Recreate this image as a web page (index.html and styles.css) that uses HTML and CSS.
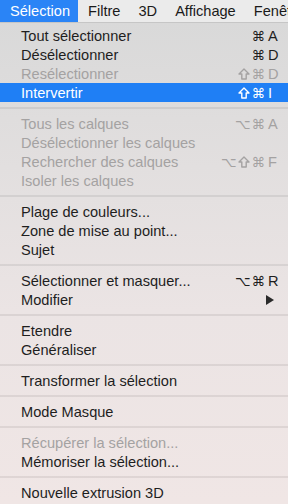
FILE: index.html
```html
<!DOCTYPE html>
<html lang="fr">
<head>
  <meta charset="UTF-8">
  <title>Sélection</title>
  <link rel="stylesheet" href="styles.css">
</head>
<body>
  <div class="menubar">
    <span class="bar-item open">Sélection</span>
    <span class="bar-item">Filtre</span>
    <span class="bar-item">3D</span>
    <span class="bar-item">Affichage</span>
    <span class="bar-item">Fenêtre</span>
  </div>

  <div class="menu">
    <div class="item"><span class="label">Tout sélectionner</span><span class="keys"><span class="mods">⌘</span><span class="key">A</span></span></div>
    <div class="item"><span class="label">Désélectionner</span><span class="keys"><span class="mods">⌘</span><span class="key">D</span></span></div>
    <div class="item disabled"><span class="label">Resélectionner</span><span class="keys"><svg class="shift" viewBox="0 0 12 12"><path d="M6 1 L11 6 H8.2 V11 H3.8 V6 H1 Z"/></svg><span class="mods">⌘</span><span class="key">D</span></span></div>
    <div class="item selected"><span class="label">Intervertir</span><span class="keys"><svg class="shift" viewBox="0 0 12 12"><path d="M6 1 L11 6 H8.2 V11 H3.8 V6 H1 Z"/></svg><span class="mods">⌘</span><span class="key">I</span></span></div>
    <div class="sep"></div>
    <div class="item disabled"><span class="label">Tous les calques</span><span class="keys"><span class="mods">⌥⌘</span><span class="key">A</span></span></div>
    <div class="item disabled"><span class="label">Désélectionner les calques</span></div>
    <div class="item disabled"><span class="label">Rechercher des calques</span><span class="keys"><span class="mods">⌥</span><svg class="shift" viewBox="0 0 12 12"><path d="M6 1 L11 6 H8.2 V11 H3.8 V6 H1 Z"/></svg><span class="mods">⌘</span><span class="key">F</span></span></div>
    <div class="item disabled"><span class="label">Isoler les calques</span></div>
    <div class="sep"></div>
    <div class="item"><span class="label">Plage de couleurs...</span></div>
    <div class="item"><span class="label">Zone de mise au point...</span></div>
    <div class="item"><span class="label">Sujet</span></div>
    <div class="sep"></div>
    <div class="item"><span class="label">Sélectionner et masquer...</span><span class="keys"><span class="mods">⌥⌘</span><span class="key">R</span></span></div>
    <div class="item"><span class="label">Modifier</span><span class="keys"><svg class="arrow" viewBox="0 0 8 10"><path d="M0 0 L8 5 L0 10 Z"/></svg></span></div>
    <div class="sep"></div>
    <div class="item"><span class="label">Etendre</span></div>
    <div class="item"><span class="label">Généraliser</span></div>
    <div class="sep"></div>
    <div class="item"><span class="label">Transformer la sélection</span></div>
    <div class="sep"></div>
    <div class="item"><span class="label">Mode Masque</span></div>
    <div class="sep"></div>
    <div class="item disabled"><span class="label">Récupérer la sélection...</span></div>
    <div class="item"><span class="label">Mémoriser la sélection...</span></div>
    <div class="sep"></div>
    <div class="item"><span class="label">Nouvelle extrusion 3D</span></div>
  </div>
</body>
</html>
```

FILE: styles.css
```css
body {
  margin: 0;
  padding: 0;
  font-family: "Liberation Sans", Arial, sans-serif;
  font-size: 14.6px;
  color: #1e1e1e;
  background: #efe6e5;
  overflow: hidden;
  height: 504px;
}
.menubar {
  display: flex;
  height: 22px;
  background: #ebebeb;
  border-bottom: 1px solid #c6c6c6;
  white-space: nowrap;
  overflow: hidden;
}
.bar-item {
  padding: 0 8px 0 10px;
  line-height: 22px;
  color: #1a1a1a;
}
.bar-item.open {
  background: #2a84f6;
  color: #fff;
}
.menu {
  height: 481px;
  padding-top: 3px;
  box-sizing: border-box;
  background: linear-gradient(#d9d9d9 0%, #e2dfdf 30%, #ebe4e4 60%, #f0e6e5 100%);
}
.item {
  display: flex;
  justify-content: space-between;
  align-items: center;
  height: 19px;
  padding: 0 10px 0 21px;
}
.item.disabled {
  color: #a4a2a2;
}
.item.selected {
  background: #1f7ff5;
  color: #fff;
}
.keys {
  display: flex;
  align-items: center;
}
.mods {
  font-family: "DejaVu Sans", sans-serif;
  font-size: 13.5px;
  letter-spacing: 1px;
}
.shift {
  width: 12px;
  height: 12px;
  margin-right: 2px;
  fill: none;
  stroke: currentColor;
  stroke-width: 1.4;
  stroke-linejoin: round;
}
.key {
  width: 10px;
  margin-left: 2px;
}
.arrow {
  width: 8px;
  height: 10px;
  margin-right: 4px;
  fill: #2a2a2a;
}
.sep {
  height: 2px;
  margin: 5px 0;
  background: rgba(0, 0, 0, 0.07);
}
```
